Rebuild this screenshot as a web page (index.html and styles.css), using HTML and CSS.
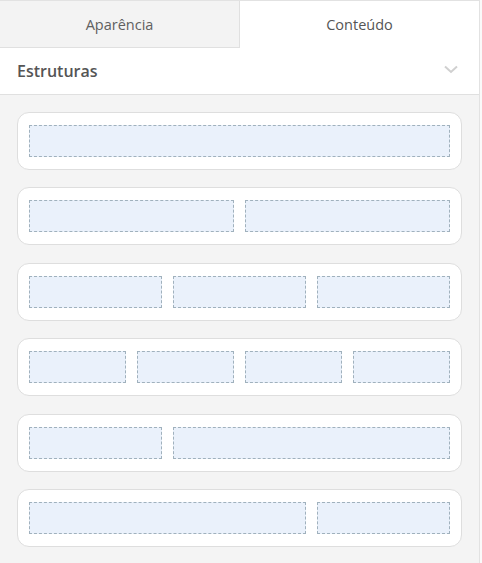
FILE: index.html
```html
<!doctype html>
<html>
<head>
    <meta charset="utf-8">
    <link rel="stylesheet" href="styles.css">
</head>
<body>
    <div class="panel">
        <div class="tabs">
            <div class="tab">Aparência</div>
            <div class="tab active">Conteúdo</div>
        </div>
        <div class="section-head">
            <span>Estruturas</span>
            <svg class="chevron" width="14" height="9" viewBox="0 0 14 9"><path d="M1 1.5 L7 7 L13 1.5" fill="none" stroke="#d0d0d0" stroke-width="2"/></svg>
        </div>
        <div class="list">
            <div class="row cols-1"><div class="cell"></div></div>
            <div class="row cols-2"><div class="cell"></div><div class="cell"></div></div>
            <div class="row cols-3"><div class="cell"></div><div class="cell"></div><div class="cell"></div></div>
            <div class="row cols-4"><div class="cell"></div><div class="cell"></div><div class="cell"></div><div class="cell"></div></div>
            <div class="row cols-3"><div class="cell"></div><div class="cell wide"></div></div>
            <div class="row cols-3"><div class="cell wide"></div><div class="cell"></div></div>
        </div>
    </div>
</body>
</html>
```

FILE: styles.css
```css
* {
    margin: 0;
    padding: 0;
    box-sizing: border-box;
}
html, body {
    width: 100%;
    height: 100%;
}
body {
    background-color: #fafafa;
    font-family: "Open Sans", "Liberation Sans", sans-serif;
    color: #555;
}
.panel {
    width: 480px;
    height: 563px;
    background-color: #f4f4f4;
    border-top: 1px solid #e2e2e2;
    border-right: 1px solid #e2e2e2;
    overflow: hidden;
}
.tabs {
    display: flex;
    height: 47px;
}
.tab {
    flex: 1;
    display: flex;
    align-items: center;
    justify-content: center;
    font-size: 14.5px;
    color: #606060;
    background-color: #f3f3f3;
    border-right: 1px solid #e0e0e0;
    border-bottom: 1px solid #e0e0e0;
}
.tab.active {
    background-color: #fff;
    border-right: none;
    border-bottom: none;
    color: #555;
}
.section-head {
    height: 47px;
    display: flex;
    align-items: center;
    justify-content: space-between;
    padding: 0 21px 0 17px;
    background-color: #fff;
    border-bottom: 1px solid #e0e0e0;
    font-size: 16px;
    font-weight: 600;
    color: #555;
}
.chevron {
    margin-top: -4px;
}
.list {
    display: flex;
    flex-direction: column;
    gap: 17.4px;
    padding: 17px 17px 0 17px;
    box-sizing: content-box;
    width: 445px;
}
.row {
    display: grid;
    gap: 11px;
    height: 58px;
    padding: 12px 11px;
    background-color: #fff;
    border: 1px solid #dedede;
    border-radius: 12px;
}
.cols-1 { grid-template-columns: 1fr; }
.cols-2 { grid-template-columns: 1fr 1fr; }
.cols-3 { grid-template-columns: 1fr 1fr 1fr; }
.cols-4 { grid-template-columns: 1fr 1fr 1fr 1fr; }
.cell {
    background-color: #eaf1fb;
    border: 1px dashed #a0b1bd;
}
.cell.wide {
    grid-column: span 2;
}
```
